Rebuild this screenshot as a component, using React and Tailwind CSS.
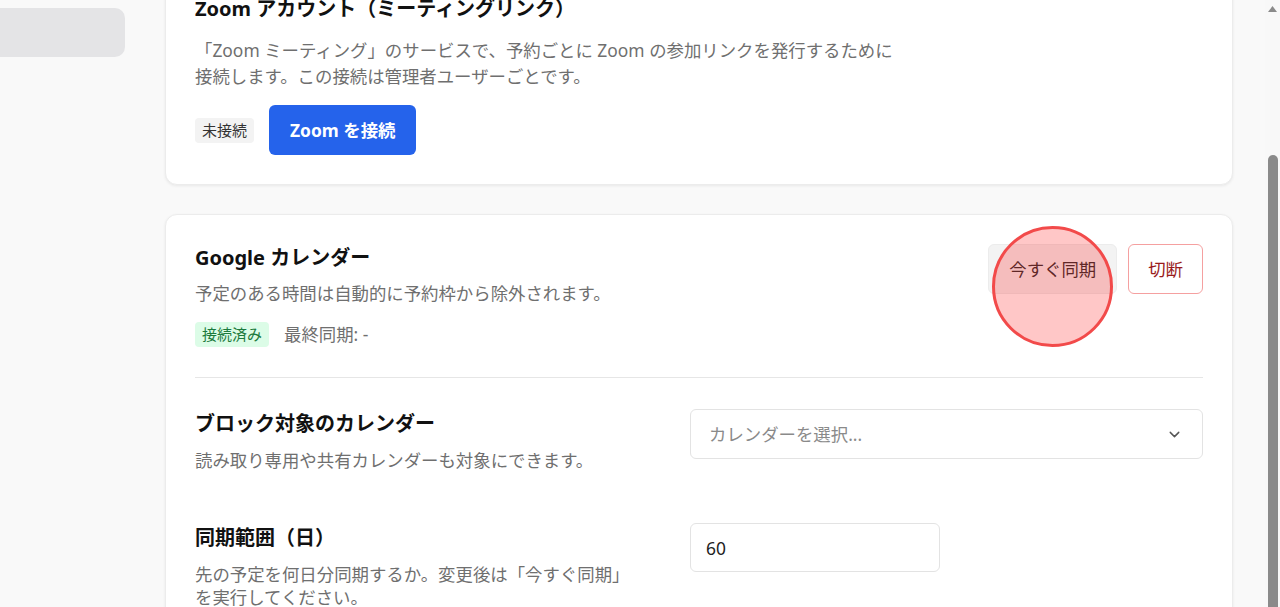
import {ChevronDown} from "lucide-react"

function Badge({tone, children}) {
    const tones = {
        gray: "bg-[#f3f3f3] text-[#333]",
        green: "bg-[#dcfce7] text-[#1b7a3c]",
    }
    return (
        <span className={`inline-flex h-[25px] items-center rounded-[4px] px-[7px] text-[15px] ${tones[tone]}`}>
            {children}
        </span>
    )
}

function SettingRow({title, children, control}) {
    return (
        <div className="flex items-start">
            <div className="w-[440px] shrink-0 pt-[1px]">
                <h3 className="text-[20px] font-bold leading-[28px] text-[#111]">{title}</h3>
                <p className="mt-[11px] text-[17.4px] leading-[23px] text-[#6f6f6f]">{children}</p>
            </div>
            <div className="ml-auto w-[513px]">{control}</div>
        </div>
    )
}

function ZoomCard() {
    return (
        <section className="rounded-[12px] border border-[#ececec] bg-white px-[29px] py-[29px] shadow-[0_1px_3px_rgba(0,0,0,0.07)]">
            <h2 className="text-[20px] font-bold leading-[28px] text-[#111]">Zoom アカウント（ミーティングリンク）</h2>
            <p className="mt-[14px] text-[17.4px] leading-[26px] text-[#6f6f6f]">
                「Zoom ミーティング」のサービスで、予約ごとに Zoom の参加リンクを発行するために
                <br />
                接続します。この接続は管理者ユーザーごとです。
            </p>
            <div className="mt-[16px] flex items-center gap-[15px]">
                <Badge tone="gray">未接続</Badge>
                <button className="h-[50px] rounded-[6px] bg-[#2563eb] px-[21px] text-[17.4px] font-bold text-white">
                    Zoom を接続
                </button>
            </div>
        </section>
    )
}

function CalendarCard() {
    return (
        <section className="rounded-[12px] border border-[#ececec] bg-white px-[29px] pt-[29px] pb-[40px] shadow-[0_1px_3px_rgba(0,0,0,0.07)]">
            <div className="flex items-start justify-between border-b border-[#e6e6e6] pb-[30px]">
                <div>
                    <h2 className="text-[20px] font-bold leading-[28px] text-[#111]">Google カレンダー</h2>
                    <p className="mt-2 text-[17.4px] leading-[26px] text-[#6f6f6f]">
                        予定のある時間は自動的に予約枠から除外されます。
                    </p>
                    <div className="mt-[15px] flex items-center gap-[15px]">
                        <Badge tone="green">接続済み</Badge>
                        <span className="text-[17.4px] text-[#6f6f6f]">最終同期: -</span>
                    </div>
                </div>
                <div className="relative flex gap-[11px]">
                    <button className="h-[50px] rounded-[6px] border border-[#ececec] bg-[#f3f3f3] px-[20px] text-[17.4px] text-[#333]">
                        今すぐ同期
                    </button>
                    <button className="h-[50px] rounded-[6px] border border-[#f5a0a0] bg-white px-[19px] text-[17.4px] text-[#991b1b]">
                        切断
                    </button>
                    {/* click marker */}
                    <div className="pointer-events-none absolute left-[4px] top-[-18px] h-[121px] w-[121px] rounded-full border-[3px] border-[#f24a4a] bg-[rgba(255,0,0,0.22)]" />
                </div>
            </div>

            <div className="flex flex-col gap-[51px] pt-[31px]">
                <SettingRow
                    title="ブロック対象のカレンダー"
                    control={
                        <div className="flex h-[50px] items-center justify-between rounded-[6px] border border-[#e3e3e3] bg-white px-[18px]">
                            <span className="text-[17.4px] text-[#8a8a8a]">カレンダーを選択...</span>
                            <ChevronDown size={17} strokeWidth={2} className="mr-[1px] text-[#555]" />
                        </div>
                    }
                >
                    読み取り専用や共有カレンダーも対象にできます。
                </SettingRow>
                <SettingRow
                    title="同期範囲（日）"
                    control={
                        <div className="flex h-[49px] w-[250px] items-center rounded-[6px] border border-[#e3e3e3] bg-white px-[15px] text-[17.4px] text-[#222]">
                            60
                        </div>
                    }
                >
                    先の予定を何日分同期するか。変更後は「今すぐ同期」
                    <br />
                    を実行してください。
                </SettingRow>
            </div>
        </section>
    )
}

export default function App() {
    return (
        <div className="flex h-[607px] overflow-hidden bg-[#f9f9f9] font-['Noto_Sans','Noto_Sans_CJK_JP',sans-serif]">
            <aside className="w-[165px] shrink-0 pt-[8px]">
                <div className="h-[49px] w-[125px] rounded-r-[10px] bg-[#e4e4e6]" />
            </aside>

            <main className="min-w-0 flex-1 pr-[32px]">
                <div className="-mt-[35px] flex flex-col gap-[29px]">
                    <ZoomCard />
                    <CalendarCard />
                </div>
            </main>

            {/* scrollbar */}
            <div className="flex w-[15px] shrink-0 flex-col items-center bg-[#f8f8f8]">
                <svg width="9" height="6" viewBox="0 0 9 6" className="mt-[6px]">
                    <polygon points="4.5,0 9,6 0,6" fill="#8a8a8a" />
                </svg>
                <div className="mt-[143px] w-[10px] flex-1 rounded-t-full bg-[#8a8a8a]" />
            </div>
        </div>
    )
}
